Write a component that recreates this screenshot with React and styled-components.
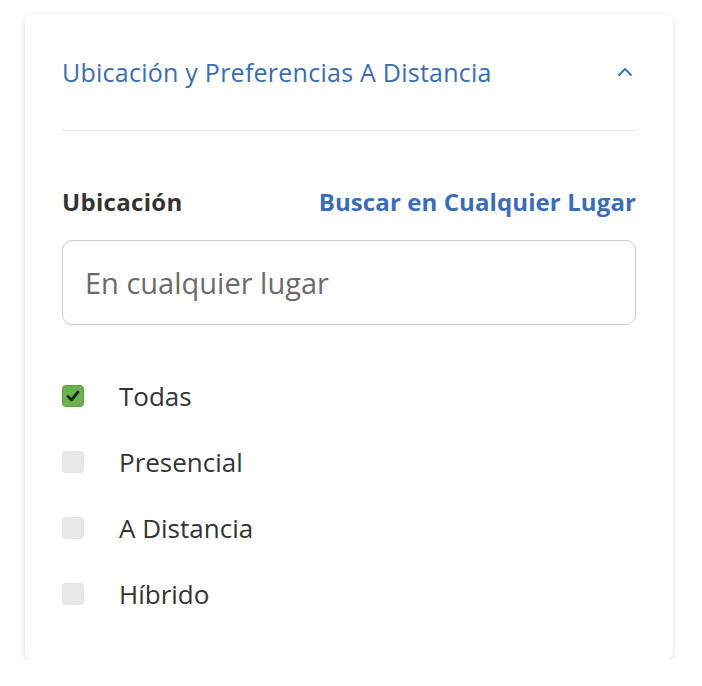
import React from 'react';
import styled, { createGlobalStyle } from 'styled-components';

const Global = createGlobalStyle`
  html, body { margin: 0; padding: 0; background: #ffffff; }
  body { font-family: "Open Sans", "Noto Sans", sans-serif; }
`;

const Card = styled.div`
  margin: 14px 0 0 25px;
  width: 648px;
  box-sizing: border-box;
  padding: 0 37px 43px;
  background: #fff;
  border-radius: 7px;
  box-shadow: 0 2px 6px rgba(0, 0, 0, 0.13);
`;

const Header = styled.div`
  height: 116px;
  display: flex;
  align-items: center;
  justify-content: space-between;
  border-bottom: 1px solid #e3e5e8;
`;

const Title = styled.div`
  font-size: 25px;
  line-height: 30px;
  color: #3b6db3;
  letter-spacing: 0.25px;
`;

const Chevron = styled.svg`
  width: 18px;
  height: 18px;
  margin-right: 2px;
`;

const LabelRow = styled.div`
  margin-top: 55px;
  height: 30px;
  display: flex;
  align-items: center;
  justify-content: space-between;
`;

const Label = styled.div`
  font-size: 24px;
  font-weight: 700;
  color: #333;
  letter-spacing: 0.3px;
`;

const LinkText = styled.a`
  font-size: 24px;
  font-weight: 700;
  color: #3a6db5;
  text-decoration: none;
  letter-spacing: 0.1px;
  cursor: pointer;
`;

const Input = styled.input`
  display: block;
  margin-top: 24px;
  width: 100%;
  height: 85px;
  box-sizing: border-box;
  border: 1px solid #c9ccd0;
  border-radius: 10px;
  padding: 0 22px;
  font-family: inherit;
  font-size: 29px;
  color: #333;
  outline: none;
  &::placeholder { color: #6b6b6b; }
`;

const List = styled.div`
  margin-top: 49px;
  display: flex;
  flex-direction: column;
  gap: 22px;
`;

const Row = styled.label`
  height: 44px;
  display: flex;
  align-items: center;
  gap: 35px;
  font-size: 26px;
  line-height: 30px;
  color: #333;
  cursor: pointer;
`;

const Box = styled.span`
  width: 22px;
  height: 22px;
  box-sizing: border-box;
  border-radius: 4px;
  display: flex;
  align-items: center;
  justify-content: center;
  background: ${p => (p.checked ? '#6cb24f' : '#e8e8e8')};
  border: 1px solid ${p => (p.checked ? '#5a9e40' : '#e2e2e2')};
`;

const options = [
  { label: 'Todas', checked: true },
  { label: 'Presencial', checked: false },
  { label: 'A Distancia', checked: false },
  { label: 'Híbrido', checked: false },
];

export default function App() {
  return (
    <>
      <Global />
      <Card>
        <Header>
          <Title>Ubicación y Preferencias A Distancia</Title>
          <Chevron viewBox="0 0 18 18">
            <path d="M3 12 L9 6 L15 12" fill="none" stroke="#3b6db3" strokeWidth="1.8" strokeLinecap="round" strokeLinejoin="round" />
          </Chevron>
        </Header>
        <LabelRow>
          <Label>Ubicación</Label>
          <LinkText>Buscar en Cualquier Lugar</LinkText>
        </LabelRow>
        <Input placeholder="En cualquier lugar" />
        <List>
          {options.map(o => (
            <Row key={o.label}>
              <Box checked={o.checked}>
                {o.checked && (
                  <svg width="16" height="16" viewBox="0 0 16 16">
                    <path d="M3 8.5 L6.5 12 L13 4" fill="none" stroke="#1d2a1a" strokeWidth="2.8" strokeLinecap="round" strokeLinejoin="round" />
                  </svg>
                )}
              </Box>
              {o.label}
            </Row>
          ))}
        </List>
      </Card>
    </>
  );
}
